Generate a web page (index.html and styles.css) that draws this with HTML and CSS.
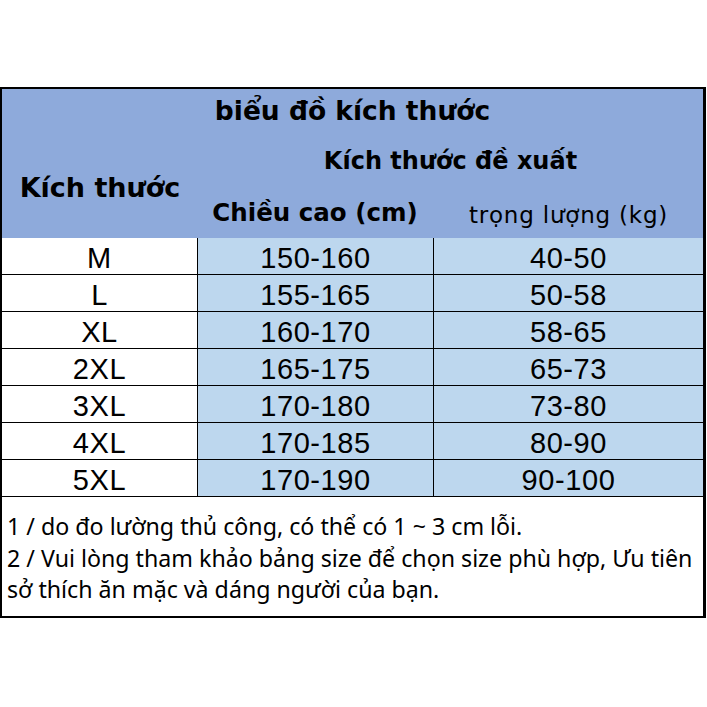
FILE: index.html
```html
<!DOCTYPE html>
<html lang="vi">
<head>
<meta charset="utf-8">
<title>biểu đồ kích thước</title>
<link rel="stylesheet" href="styles.css">
</head>
<body>
<div class="sheet">
  <div class="grid">
    <div class="h title">biểu đồ kích thước</div>
    <div class="h size-head">Kích thước</div>
    <div class="h suggest">Kích thước đề xuất</div>
    <div class="h height-head">Chiều cao (cm)</div>
    <div class="h weight-head">trọng lượng (kg)</div>

    <div class="c size">M</div><div class="c val mid">150-160</div><div class="c val">40-50</div>
    <div class="c size">L</div><div class="c val mid">155-165</div><div class="c val">50-58</div>
    <div class="c size">XL</div><div class="c val mid">160-170</div><div class="c val">58-65</div>
    <div class="c size">2XL</div><div class="c val mid">165-175</div><div class="c val">65-73</div>
    <div class="c size">3XL</div><div class="c val mid">170-180</div><div class="c val">73-80</div>
    <div class="c size">4XL</div><div class="c val mid">170-185</div><div class="c val">80-90</div>
    <div class="c size">5XL</div><div class="c val mid">170-190</div><div class="c val">90-100</div>
  </div>
  <div class="notes">
    <p>1 / do đo lường thủ công, có thể có 1 ~ 3 cm lỗi.</p>
    <p>2 / Vui lòng tham khảo bảng size để chọn size phù hợp, Ưu tiên<br>sở thích ăn mặc và dáng người của bạn.</p>
  </div>
</div>
</body>
</html>
```
FILE: styles.css
```css
html, body {
  margin: 0;
  padding: 0;
  background: #fff;
}
.sheet {
  margin-top: 87px;
  width: 706px;
  box-sizing: border-box;
  border: 2px solid #000;
  border-right-width: 3px;
}
.grid {
  display: grid;
  grid-template-columns: 196px 236px 1fr;
  grid-template-rows: 49px 50px 50px repeat(7, 37px);
}
.h {
  background: #8eaadb;
  color: #000;
  font-family: "DejaVu Sans", sans-serif;
  font-weight: bold;
  display: flex;
  align-items: center;
  justify-content: center;
  white-space: nowrap;
}
.title {
  grid-column: 1 / 4;
  font-size: 26.5px;
  padding-bottom: 6px;
}
.size-head {
  grid-row: 2 / 4;
  font-size: 27px;
  padding-bottom: 2px;
}
.suggest {
  grid-column: 2 / 4;
  font-size: 24px;
  padding-bottom: 4px;
}
.height-head {
  font-size: 24.5px;
  padding-right: 2px;
  padding-bottom: 2px;
}
.weight-head {
  font-weight: normal;
  font-size: 23px;
  letter-spacing: 0.8px;
  padding-top: 4px;
}
.c {
  display: flex;
  align-items: center;
  justify-content: center;
  font-family: "Liberation Sans", Arial, sans-serif;
  font-size: 29px;
  letter-spacing: 0.6px;
  color: #000;
  border-bottom: 1px solid #000;
  box-sizing: border-box;
  padding-top: 4px;
}
.size {
  background: #fff;
  border-right: 1px solid #000;
}
.val {
  background: #bdd7ee;
}
.val.mid {
  border-right: 1px solid #000;
}
.notes {
  padding: 14px 0 10px 5px;
  font-family: "Noto Sans", "Open Sans", sans-serif;
  font-size: 23.2px;
  line-height: 31.5px;
  color: #000;
  white-space: nowrap;
}
.notes p {
  margin: 0;
}
```
